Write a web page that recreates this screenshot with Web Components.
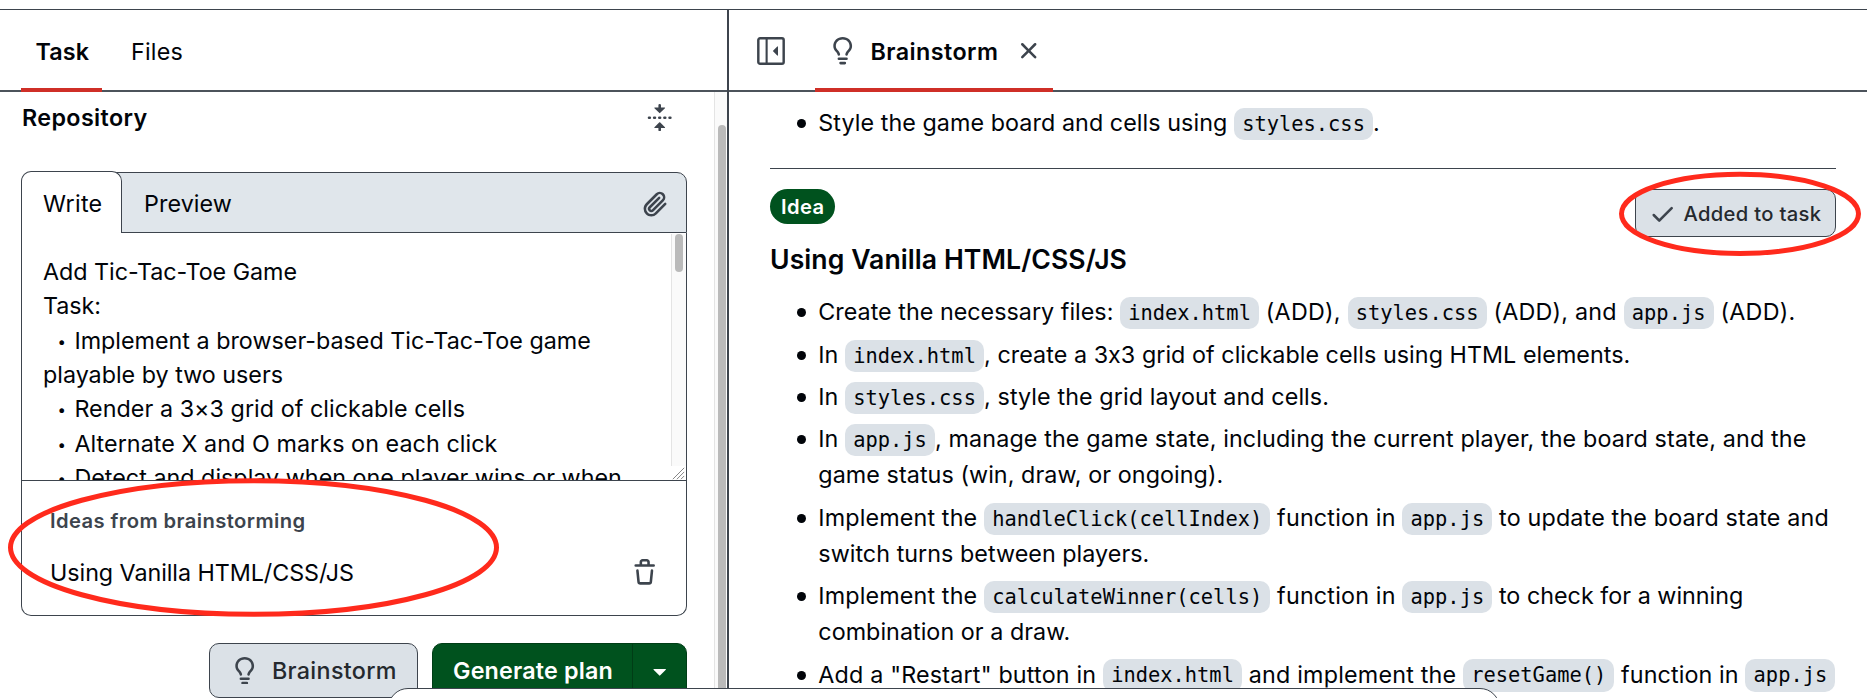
<!DOCTYPE html>
<html lang="en">
<head>
<meta charset="utf-8">
<title>Brainstorm</title>
<style>
html,body{margin:0;height:698px;overflow:hidden;background:#fff}
body{font:23.3px/36px Inter,"Liberation Sans",sans-serif;color:#010409}
</style>
</head>
<body>
<app-frame></app-frame>
<script>
const define = (name, html, setup) => {
  const t = document.createElement('template');
  t.innerHTML = html;
  customElements.define(name, class extends HTMLElement {
    connectedCallback() {
      if (this.shadowRoot) return;
      this.attachShadow({ mode: 'open' }).append(t.content.cloneNode(true));
      if (setup) setup(this);
    }
  });
};

const ICONS = {
  bulb: '<path d="M8 1.5c-2.363 0-4 1.69-4 3.75 0 .984.424 1.625.984 2.304l.214.253c.223.264.47.556.673.848.284.411.537.896.621 1.49a.75.75 0 0 1-1.484.211c-.04-.282-.163-.547-.37-.847a8.456 8.456 0 0 0-.542-.68c-.084-.1-.173-.205-.268-.32C3.201 7.75 2.5 6.766 2.5 5.25 2.5 2.31 4.863 0 8 0s5.5 2.31 5.5 5.25c0 1.516-.701 2.5-1.328 3.259-.095.115-.184.22-.268.319-.207.245-.383.453-.541.681-.208.3-.33.565-.37.847a.751.751 0 0 1-1.485-.212c.084-.593.337-1.078.621-1.489.203-.292.45-.584.673-.848.075-.088.147-.173.213-.253.561-.679.985-1.32.985-2.304 0-2.06-1.637-3.75-4-3.75ZM5.75 12h4.5a.75.75 0 0 1 0 1.5h-4.5a.75.75 0 0 1 0-1.5ZM6 15.25a.75.75 0 0 1 .75-.75h2.5a.75.75 0 0 1 0 1.5h-2.5a.75.75 0 0 1-.75-.75Z"/>',
  close: '<path d="M3.72 3.72a.75.75 0 0 1 1.06 0L8 6.94l3.22-3.22a.749.749 0 0 1 1.275.326.749.749 0 0 1-.215.734L9.06 8l3.22 3.22a.749.749 0 0 1-.326 1.275.749.749 0 0 1-.734-.215L8 9.06l-3.22 3.22a.751.751 0 0 1-1.042-.018.751.751 0 0 1-.018-1.042L6.94 8 3.72 4.78a.75.75 0 0 1 0-1.06Z"/>',
  check: '<path d="M13.78 4.22a.75.75 0 0 1 0 1.06l-7.25 7.25a.75.75 0 0 1-1.06 0L2.22 9.28a.751.751 0 0 1 .018-1.042.751.751 0 0 1 1.042-.018L6 10.94l6.72-6.72a.75.75 0 0 1 1.06 0Z"/>',
  trash: '<path d="M11 1.75V3h2.25a.75.75 0 0 1 0 1.5H2.75a.75.75 0 0 1 0-1.5H5V1.75C5 .784 5.784 0 6.75 0h2.5C10.216 0 11 .784 11 1.75ZM4.496 6.675l.66 6.6a.25.25 0 0 0 .249.225h5.19a.25.25 0 0 0 .249-.225l.66-6.6a.75.75 0 0 1 1.492.149l-.66 6.6A1.748 1.748 0 0 1 10.595 15h-5.19a1.75 1.75 0 0 1-1.741-1.575l-.66-6.6a.75.75 0 1 1 1.492-.15ZM6.5 1.75V3h3V1.75a.25.25 0 0 0-.25-.25h-2.5a.25.25 0 0 0-.25.25Z"/>',
  clip: '<path d="M12.212 3.02a1.753 1.753 0 0 0-2.478.003l-5.83 5.83a3.007 3.007 0 0 0-.88 2.127c0 .795.315 1.551.88 2.116.567.567 1.333.89 2.126.89.79 0 1.548-.321 2.116-.89l5.48-5.48a.75.75 0 0 1 1.061 1.06l-5.48 5.48a4.492 4.492 0 0 1-3.177 1.33c-1.2 0-2.345-.487-3.187-1.33a4.483 4.483 0 0 1-1.32-3.177c0-1.195.475-2.341 1.32-3.186l5.83-5.83a3.25 3.25 0 0 1 5.553 2.297c0 .863-.343 1.691-.953 2.301L7.439 12.39c-.375.377-.884.59-1.416.593a1.998 1.998 0 0 1-1.412-.593 1.992 1.992 0 0 1 0-2.828l5.48-5.48a.751.751 0 0 1 1.042.018.751.751 0 0 1 .018 1.042l-5.48 5.48a.492.492 0 0 0 0 .707.499.499 0 0 0 .352.154.51.51 0 0 0 .356-.154l5.833-5.827a1.755 1.755 0 0 0 0-2.481Z"/>',
  caret: '<path d="m4.427 7.427 3.396 3.396a.25.25 0 0 0 .354 0l3.396-3.396A.25.25 0 0 0 11.396 7H4.604a.25.25 0 0 0-.177.427Z"/>',
  fold: '<path d="M10.896 2H8.75V.75a.75.75 0 0 0-1.5 0V2H5.104a.25.25 0 0 0-.177.427l2.896 2.896a.25.25 0 0 0 .354 0l2.896-2.896A.25.25 0 0 0 10.896 2ZM8.75 15.25a.75.75 0 0 1-1.5 0V14H5.104a.25.25 0 0 1-.177-.427l2.896-2.896a.25.25 0 0 1 .354 0l2.896 2.896a.25.25 0 0 1-.177.427H8.75v1.25Zm-6.5-6.5a.75.75 0 0 0 0-1.5h-.5a.75.75 0 0 0 0 1.5h.5ZM6 8a.75.75 0 0 1-.75.75h-.5a.75.75 0 0 1 0-1.5h.5A.75.75 0 0 1 6 8Zm2.25.75a.75.75 0 0 0 0-1.5h-.5a.75.75 0 0 0 0 1.5h.5ZM12 8a.75.75 0 0 1-.75.75h-.5a.75.75 0 0 1 0-1.5h.5A.75.75 0 0 1 12 8Zm2.25.75a.75.75 0 0 0 0-1.5h-.5a.75.75 0 0 0 0 1.5h.5Z"/>',
  sidebar: '<rect x=".75" y=".75" width="14.5" height="14.5" rx="1" fill="none" stroke="currentColor" stroke-width="1.4"/><path d="M5.5 1v14" stroke="currentColor" stroke-width="1.2"/><path d="M12 5.6v4.8a.25.25 0 0 1-.43.18L9.17 8.18a.25.25 0 0 1 0-.36l2.4-2.4a.25.25 0 0 1 .43.18Z"/>',
  grip: '<path d="M1 15 15 1M6 15 15 6M11 15l4-4" stroke="currentColor" stroke-width="1.1"/>'
};

define('ui-icon', `<style>:host{display:block;flex:none;width:27.4px;height:27.4px;color:#3d444d}svg{display:block;width:100%;height:100%;fill:currentColor}</style><svg viewBox="0 0 16 16"></svg>`,
  el => { el.shadowRoot.querySelector('svg').innerHTML = ICONS[el.getAttribute('name')]; });

/* A run of text whose tracking is adjusted so that it fills the width in "w". */
define('text-run', `<style>:host{display:inline-block;white-space:pre;flex:none}</style><slot></slot>`,
  el => {
    const w = parseFloat(el.getAttribute('w'));
    const n = el.textContent.length;
    el.style.letterSpacing = ((w - el.getBoundingClientRect().width) / n).toFixed(4) + 'px';
    el.style.width = w + 'px';
  });

define('code-chip', `<style>:host{display:inline;font:20.4px/1 "DejaVu Sans Mono",monospace;letter-spacing:0;padding:4.08px 8.16px;background:#dbe1e7;border-radius:10px;white-space:pre}</style><slot></slot>`);

define('list-item', `<style>:host{display:block;padding-left:48.3px;margin-bottom:6.4px;line-height:36px;white-space:nowrap}
:host::before{content:"";display:inline-block;width:9px;height:9px;border-radius:50%;background:#010409;margin:0 12.2px 0 -21.2px;vertical-align:3px}</style><slot></slot>`);

define('nav-tab', `<style>:host{display:flex;align-items:center;position:relative;height:80px;line-height:36px;box-sizing:border-box}
::slotted(text-run){padding-top:3px}
:host([active]){font-weight:600}
:host([active])::after{content:"";position:absolute;left:0;right:0;bottom:-2px;height:4px;background:#cf2f27}</style><slot></slot>`);

define('ui-button', `<style>:host{display:flex;align-items:center;box-sizing:border-box;height:55px;border:1px solid #3d444d;border-radius:10px;background:#dbe1e7;color:#25292e;font-weight:500}
::slotted(text-run){padding-top:1.4px}</style><slot></slot>`);

define('scroll-rail', `<style>:host{display:block;box-sizing:border-box;flex:none;background:#fafafa;border-left:1px solid #e4e4e4}
i{display:block;box-sizing:border-box;width:8px;margin-left:3px;border-radius:4px;background:#bababa;margin-top:var(--from);height:var(--len)}</style><i></i>`);

define('task-editor', `<style>
:host{display:block}
.bar{display:flex;align-items:center;position:relative;box-sizing:border-box;height:61px;margin-top:1px;border:1px solid #3d444d;border-radius:10px 10px 0 0;background:#e0e6eb}
.write{box-sizing:border-box;width:101px;height:62px;margin:-2px 22px -1px -1px;padding:13.7px 0 0 21px;border:1px solid #3d444d;border-bottom:0;border-radius:10px 10px 0 0;background:#fff}
.bar > text-run{padding-top:3px}
.bar ui-icon{margin-left:auto;margin-right:18px;margin-top:2px}
.area{display:flex;box-sizing:border-box;height:247.5px;border:1px solid #3d444d;border-top:0;overflow:hidden}
.text{flex:1;padding:22px 0 0 21px;line-height:34.33px}
.text div{height:34.33px;white-space:nowrap}
.dot{display:inline-block;width:31.4px;text-indent:14.6px;font-size:15px;line-height:1;vertical-align:2px}
.side{width:15px}
scroll-rail{width:15px;height:232px;--from:1px;--len:38px}
.side ui-icon{width:13px;height:13px;margin:1px 0 0 1px;color:#777}
.ideas{box-sizing:border-box;height:135px;border:1px solid #3d444d;border-top:0;border-radius:0 0 10px 10px;padding:25.4px 28px 0 28px}
.head{font-size:20.2px;font-weight:600;line-height:30px;color:#3d444d;height:30px}
.row{display:flex;align-items:center;justify-content:space-between;height:40px;margin-top:17.6px}
.row ui-icon{margin-top:-1px}
</style>
<div class="bar"><div class="write"><text-run w="59.5">Write</text-run></div><text-run w="88">Preview</text-run><ui-icon name="clip"></ui-icon></div>
<div class="area"><div class="text">
<div><text-run w="254">Add Tic-Tac-Toe Game</text-run></div>
<div><text-run w="58">Task:</text-run></div>
<div><span class="dot">•</span><text-run w="516.4">Implement a browser-based Tic-Tac-Toe game</text-run></div>
<div><text-run w="240">playable by two users</text-run></div>
<div><span class="dot">•</span><text-run w="390.6">Render a 3×3 grid of clickable cells</text-run></div>
<div><span class="dot">•</span><text-run w="423">Alternate X and O marks on each click</text-run></div>
<div><span class="dot">•</span><text-run w="547.5">Detect and display when one player wins or when</text-run></div>
</div><div class="side"><scroll-rail></scroll-rail><ui-icon name="grip"></ui-icon></div></div>
<div class="ideas"><div class="head"><text-run w="255.5">Ideas from brainstorming</text-run></div>
<div class="row"><text-run w="304">Using Vanilla HTML/CSS/JS</text-run><ui-icon name="trash"></ui-icon></div></div>`);

define('task-panel', `<style>
:host{display:block;width:727px;border-right:2px solid #3d444d;box-sizing:content-box;overflow:hidden}
header{display:flex;gap:15px;box-sizing:border-box;height:82px;padding-left:21px;border-bottom:2px solid #4c535b}
.body{display:flex;height:606px}
.main{width:666px;padding:0 27px 0 21px}
.title{display:flex;align-items:center;justify-content:space-between;height:51px;font-weight:600;padding:0 14px 0 1px}
task-editor{margin-top:29px}
.actions{display:flex;justify-content:flex-end;gap:14px;margin-top:27px}
.go{border-color:#003d16;background:#00521e;color:#fff;font-weight:600}
.split{width:1px;height:53px;background:#003d16}
scroll-rail{width:13px;--from:33px;--len:600px}
</style>
<header><nav-tab active style="width:81px"><text-run w="53.5" style="margin-left:14.5px">Task</text-run></nav-tab>
<nav-tab><text-run w="52" style="margin-left:14px">Files</text-run></nav-tab></header>
<div class="body"><div class="main">
<div class="title"><text-run w="125.5">Repository</text-run><ui-icon name="fold"></ui-icon></div>
<task-editor></task-editor>
<div class="actions">
<ui-button style="width:209px"><ui-icon name="bulb" style="margin:1px 13.5px 0 21px"></ui-icon><text-run w="125">Brainstorm</text-run></ui-button>
<ui-button class="go" style="width:255px"><text-run w="160" style="margin:0 19px 0 20px">Generate plan</text-run><span class="split"></span><ui-icon name="caret" style="color:#fff;margin:1px 0 0 13px"></ui-icon></ui-button>
</div></div><scroll-rail></scroll-rail></div>`);

define('brainstorm-panel', `<style>
:host{display:block;flex:1;overflow:hidden}
header{display:flex;align-items:center;box-sizing:border-box;height:82px;padding-left:28px;border-bottom:2px solid #4c535b}
header > ui-icon{margin-top:2px}
nav-tab ui-icon{position:relative;top:1px}
main{height:606px;padding:13px 31px 0 41px}
hr{border:0;height:1px;background:#3d444d;margin:27px 0 0}
.meta{display:flex;justify-content:space-between;align-items:flex-start;margin-top:20px;height:49px}
.idea{display:flex;align-items:center;box-sizing:border-box;width:65px;height:35px;padding:1.4px 0 0 11px;border-radius:18px;background:#00521e;color:#fff;font-size:20.2px;font-weight:600}
h3{margin:4px 0 0;font-size:26.6px;font-weight:600;line-height:34px;height:34px}
.list{padding-top:18.2px}
</style>
<header><ui-icon name="sidebar" style="width:28px;height:28px;margin-right:30px"></ui-icon>
<nav-tab active style="width:238px;"><ui-icon name="bulb" style="margin:0 14px 0 14px"></ui-icon><text-run w="128">Brainstorm</text-run><ui-icon name="close" style="margin-left:17px"></ui-icon></nav-tab></header>
<main>
<list-item><text-run w="415.7">Style the game board and cells using </text-run><code-chip>styles.css</code-chip><text-run w="7">.</text-run></list-item>
<hr>
<div class="meta"><span class="idea"><text-run w="43.5">Idea</text-run></span>
<ui-button style="width:201px;height:48px;font-size:20.2px"><ui-icon name="check" style="margin:1px 7px 0 13px"></ui-icon><text-run w="138">Added to task</text-run></ui-button></div>
<h3><text-run w="357">Using Vanilla HTML/CSS/JS</text-run></h3>
<div class="list">
<list-item><text-run w="301.7">Create the necessary files: </text-run><code-chip>index.html</code-chip><text-run w="88.5"> (ADD), </text-run><code-chip>styles.css</code-chip><text-run w="137"> (ADD), and </text-run><code-chip>app.js</code-chip><text-run w="82"> (ADD).</text-run></list-item>
<list-item><text-run w="26.7">In </text-run><code-chip>index.html</code-chip><text-run w="649">, create a 3x3 grid of clickable cells using HTML elements.</text-run></list-item>
<list-item><text-run w="26.7">In </text-run><code-chip>styles.css</code-chip><text-run w="345">, style the grid layout and cells.</text-run></list-item>
<list-item><text-run w="26.7">In </text-run><code-chip>app.js</code-chip><text-run w="871.5">, manage the game state, including the current player, the board state, and the</text-run><br><text-run w="405">game status (win, draw, or ongoing).</text-run></list-item>
<list-item><text-run w="165.7">Implement the </text-run><code-chip>handleClick(cellIndex)</code-chip><text-run w="132"> function in </text-run><code-chip>app.js</code-chip><text-run w="336.5"> to update the board state and</text-run><br><text-run w="331">switch turns between players.</text-run></list-item>
<list-item><text-run w="165.7">Implement the </text-run><code-chip>calculateWinner(cells)</code-chip><text-run w="132"> function in </text-run><code-chip>app.js</code-chip><text-run w="251"> to check for a winning</text-run><br><text-run w="252">combination or a draw.</text-run></list-item>
<list-item><text-run w="284.7">Add a "Restart" button in </text-run><code-chip>index.html</code-chip><text-run w="221"> and implement the </text-run><code-chip>resetGame()</code-chip><text-run w="131"> function in </text-run><code-chip>app.js</code-chip></list-item>
</div></main>`);

/* Hand-drawn style highlight rings that lie over the page. */
define('highlight-rings', `<style>:host{position:absolute;inset:0;pointer-events:none}svg{display:block}</style>
<svg width="1867" height="698" fill="none" stroke="#ff2a1c" stroke-width="5"><ellipse cx="253.5" cy="547.5" rx="243" ry="66.8"/><ellipse cx="1740" cy="213.8" rx="118.5" ry="39.6"/></svg>`);

define('bottom-sheet', `<style>:host{position:absolute;left:388px;width:1112px;top:688px;height:60px;box-sizing:border-box;border:1.5px solid #3d444d;border-radius:20px;background:#fff}</style>`);

define('app-frame', `<style>
:host{display:block;position:relative;width:1867px;height:698px;overflow:hidden;padding-top:9px;box-sizing:border-box}
.cols{display:flex;border-top:1px solid #3d444d;height:688px}
</style>
<div class="cols"><task-panel></task-panel><brainstorm-panel></brainstorm-panel></div>
<bottom-sheet></bottom-sheet><highlight-rings></highlight-rings>`);
</script>
</body>
</html>
